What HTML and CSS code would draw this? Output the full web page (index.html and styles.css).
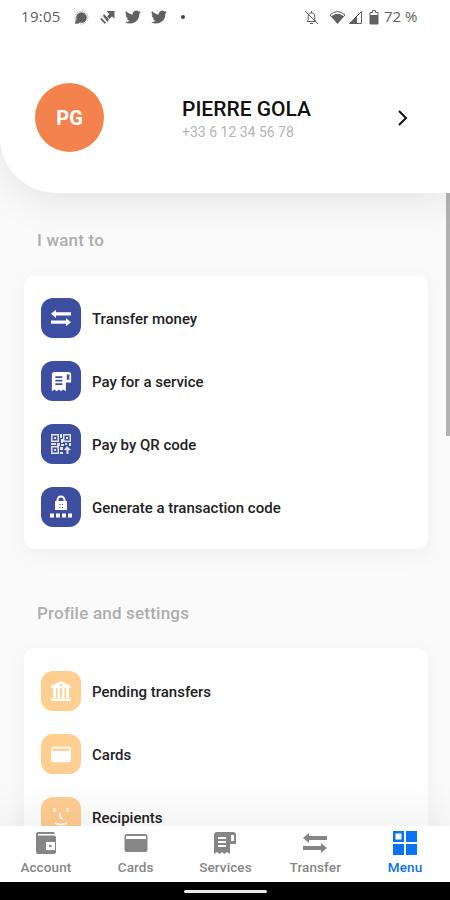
FILE: index.html
```html
<!DOCTYPE html>
<html lang="en">
<head>
    <meta charset="UTF-8">
    <meta name="viewport" content="width=device-width, initial-scale=1.0">
    <title>Menu</title>
    <link rel="stylesheet" href="styles.css">
</head>
<body>
    <!-- Shared icons -->
    <svg class="defs" width="0" height="0">
        <symbol id="transfer" viewBox="0 0 24 24">
            <path d="M6 2v3h18v4H6v3L0 7zM18 12v3H0v4h18v3l6-5z"/>
        </symbol>
        <symbol id="receipt" viewBox="0 0 24 24">
            <path fill-rule="evenodd" d="M4 1h16a3 3 0 0 1 3 3v9h-6v10l-3-2-2.500 2L9 21l-2.500 2L4 21l-3 2V4a3 3 0 0 1 3-3zM5 6v2h8V6zm0 4v2h8v-2zm0 4v2h8v-2zM18 4v6h3V4z"/>
        </symbol>
        <symbol id="card" viewBox="0 0 24 24">
            <path fill-rule="evenodd" d="M3 3h18a2.500 2.500 0 0 1 2.500 2.500v13A2.500 2.500 0 0 1 21 21H3A2.500 2.500 0 0 1 .5 18.500v-13A2.500 2.500 0 0 1 3 3zM2 5v3h20V5z"/>
        </symbol>
        <symbol id="twitter" viewBox="0 0 24 24">
            <path d="M24 4.600a10 10 0 0 1-2.800.8 5 5 0 0 0 2.100-2.700 10 10 0 0 1-3.100 1.200 4.900 4.900 0 0 0-8.400 4.500A14 14 0 0 1 1.700 3.100a4.900 4.900 0 0 0 1.500 6.600 5 5 0 0 1-2.200-.6 4.900 4.900 0 0 0 3.900 4.900 5 5 0 0 1-2.200.1 4.900 4.900 0 0 0 4.600 3.400A10 10 0 0 1 0 19.500 14 14 0 0 0 21.500 7z"/>
        </symbol>
    </svg>

    <div class="status">
        <span class="time">19:05</span>
        <svg class="chat" width="15" height="15" viewBox="0 0 15 15"><circle cx="7.500" cy="7.500" r="5.300"/><circle class="ring" cx="7.500" cy="7.500" r="6.500"/><path d="M1 14l1-5 4 4z"/></svg>
        <svg class="bolt" width="15" height="15" viewBox="0 0 15 15"><path d="M6.500 1h8v7.500L12 6.500 9.500 9 7 6.500 9.500 4zM4 4l5 5.500L7.500 12 3 6zM1 7.500l5 5L5 14 .5 9.500z"/></svg>
        <svg class="bird" width="16" height="16"><use href="#twitter"/></svg>
        <svg class="bird" width="16" height="16"><use href="#twitter"/></svg>
        <span class="dot"></span>
        <svg class="bell" width="15" height="15" viewBox="0 0 15 15"><path d="M3 11.500h9L10.800 10V6.500C10.800 4 9.500 3 7.500 3S4.200 4 4.200 6.500V10zM7.500 1v2M6 13.500h3M1 1l13 13"/></svg>
        <svg class="wifi" width="17" height="15" viewBox="0 0 17 15"><path class="line" d="M1 5Q8.500-2 16 5l-1.500 1.700Q8.500 2 2.500 6.700z"/><path d="M2 6.500Q8.500 2.500 15 6.500L8.500 14z"/></svg>
        <svg class="signal" width="15" height="15" viewBox="0 0 15 15"><path class="line" d="M13.500 1.500v12H1.500z"/><path d="M1 14L9 6v8z"/></svg>
        <svg class="battery" width="10" height="15" viewBox="0 0 10 15"><path class="line" d="M1 2.500h2.500v-2h3v2H9v11.500H1z"/><path d="M1 5h8v9H1z"/></svg>
        <span class="percent">72 %</span>
    </div>

    <header class="profile">
        <div class="avatar">PG</div>
        <div class="user">
            <h1>PIERRE GOLA</h1>
            <p>+33 6 12 34 56 78</p>
        </div>
        <svg class="chevron" width="12" height="18" viewBox="0 0 12 18"><path d="M2 2l7 7-7 7"/></svg>
    </header>

    <main class="content">
        <div class="scrollbar"></div>
        <h2>I want to</h2>
        <ul class="list blue">
            <li><span class="icon"><svg width="20" height="20"><use href="#transfer"/></svg></span><span>Transfer money</span></li>
            <li><span class="icon"><svg width="21" height="21"><use href="#receipt"/></svg></span><span>Pay for a service</span></li>
            <li>
                <span class="icon"><svg width="20" height="20" viewBox="0 0 20 20"><path opacity=".85" fill-rule="evenodd" d="M0 0h8v8H0zM1.500 1.500v5h5v-5zM3 3h2v2H3zM12 0h8v8h-8zM13.500 1.500v5h5v-5zM15 3h2v2h-2zM0 12h8v8H0zM1.500 13.500v5h5v-5zM3 15h2v2H3zM9 0h2v4H9zM10 5h2v4h-2zM0 9h5v2H0zM6 9h3v3H6zM10 10h3v2h-3zM14 9h2v2h-2zM18 9h2v3h-2zM9 13h3v3H9zM9 18h3v2H9zM16 12l4 4h-2.500v4h-2v-4H13z"/></svg></span>
                <span>Pay by QR code</span>
            </li>
            <li>
                <span class="icon"><svg width="24" height="24" viewBox="0 0 24 24"><path fill-rule="evenodd" d="M6 6h1.500V5a4.500 4.500 0 0 1 9 0v1H18v9H6zM9.500 6h5V5a2.500 2.500 0 0 0-5 0zM10.500 9h1v1h-1zm2.500 0h1v1h-1zm-2.500 3h1v1h-1zm2.500 0h1v1h-1zM1 18.500h4v4H1zM7 18.500h4v4H7zM13 18.500h4v4h-4zM19 18.500h4v4h-4z"/></svg></span>
                <span>Generate a transaction code</span>
            </li>
        </ul>

        <h2 class="second">Profile and settings</h2>
        <ul class="list orange">
            <li>
                <span class="icon"><svg width="22" height="20" viewBox="0 0 22 20"><path fill-rule="evenodd" d="M11 0l10 5v2H1V5zM11 2.500L9.500 4 11 5.500 12.500 4zM3 7h3v10H3zM7.500 7h2.500v10H7.500zM12 7h2.500v10H12zM16 7h3v10h-3zM1 17.500h20V20H1z"/></svg></span>
                <span>Pending transfers</span>
            </li>
            <li><span class="icon"><svg width="22" height="19" viewBox="0 1 24 22"><use href="#card" width="24" height="24"/></svg></span><span>Cards</span></li>
            <li>
                <span class="icon"><svg width="20" height="20" viewBox="0 0 20 20"><path class="face" d="M3.500 1v4M16.500 1v4M9 6v4q0 1.500 2.500 1.500M4 16q6 3 12 0"/></svg></span>
                <span>Recipients</span>
            </li>
        </ul>
    </main>

    <nav class="tabs">
        <a>
            <svg width="24" height="24" viewBox="0 0 24 24"><path fill-rule="evenodd" d="M4 1h15a2 2 0 0 1 2 2H4v1.500h16a2 2 0 0 1 2 2V21a2 2 0 0 1-2 2H4a2 2 0 0 1-2-2V3a2 2 0 0 1 2-2zM12 11v8h9v-8zM15 14h2.500v2H15z"/></svg>
            Account
        </a>
        <a><svg width="24" height="24"><use href="#card"/></svg>Cards</a>
        <a><svg width="24" height="24"><use href="#receipt"/></svg>Services</a>
        <a><svg width="24" height="24"><use href="#transfer"/></svg>Transfer</a>
        <a class="active">
            <svg width="24" height="24" viewBox="0 0 24 24"><path fill-rule="evenodd" d="M0 0h11v11H0zM2.500 2.500v6h6v-6zM13 0h11v11H13zM0 13h11v11H0zM13 13h11v11H13z"/></svg>
            Menu
        </a>
    </nav>
    <div class="home"><span></span></div>
</body>
</html>
```
FILE: styles.css
```css
* {
    box-sizing: border-box;
}
body {
    font-family: Roboto, sans-serif;
    background: #fff;
    display: flex;
    flex-direction: column;
    height: 900px;
    margin: 0;
    overflow: hidden;
}
h1, h2, p, ul {
    margin: 0;
    padding: 0;
}
svg {
    fill: currentColor;
    flex-shrink: 0;
}
.defs {
    position: absolute;
}
.status {
    display: flex;
    align-items: center;
    height: 34px;
    padding: 0 31px 0 21px;
    color: #606060;
    flex-shrink: 0;
}
.time, .percent {
    font-family: "Open Sans", sans-serif;
    font-size: 15px;
    line-height: 20px;
    padding-bottom: 2px;
    white-space: nowrap;
}
.time {
    width: 53px;
    letter-spacing: 0.3px;
}
.bolt {
    margin-left: 11px;
}
.bird {
    margin-left: 10px;
}
.ring {
    fill: none;
    stroke: #aaa;
    stroke-dasharray: 1.500 1;
}
.dot {
    width: 4px;
    height: 4px;
    border-radius: 50%;
    background: #444;
    margin-left: 14px;
}
.bell {
    margin-left: 119px;
}
.bell path, .line {
    fill: none;
    stroke: currentColor;
}
.wifi {
    margin-left: 10px;
}
.signal {
    margin-left: 2px;
}
.battery {
    margin-left: 6px;
}
.percent {
    margin-left: 5px;
}
.profile {
    position: relative;
    z-index: 1;
    display: flex;
    align-items: center;
    height: 159px;
    padding: 8px 41px 0 35px;
    background: #fff;
    border-bottom-left-radius: 56px;
    box-shadow: 0 8px 40px rgba(0,0,0,0.09);
    clip-path: inset(0 0 -80px 0);
    flex-shrink: 0;
}
.avatar {
    width: 69px;
    height: 69px;
    line-height: 71px;
    border-radius: 50%;
    background: #f4824d;
    color: #fff;
    font-size: 20px;
    font-weight: 700;
    text-align: center;
}
.user {
    flex: 1;
    margin: 3px 0 0 78px;
}
h1 {
    color: #111;
    font-size: 21px;
    font-weight: 500;
    line-height: 25px;
}
.user p {
    color: #b5b5b5;
    font-size: 14px;
    line-height: 20px;
}
.chevron path {
    fill: none;
    stroke: #111;
    stroke-width: 2;
}
.content {
    position: relative;
    flex: 1;
    min-height: 0;
    overflow: hidden;
    background: #fafafa;
    /* runs up behind the rounded corner of the header */
    margin-top: -60px;
    padding: 96px 22px 0 24px;
}
.scrollbar {
    position: absolute;
    top: 60px;
    right: 0;
    width: 4px;
    height: 243px;
    background: #b2b2b2;
}
h2 {
    color: #adadad;
    font-size: 17px;
    font-weight: 500;
    letter-spacing: 0.2px;
    line-height: 22px;
    padding-left: 13px;
}
.second {
    margin-top: 53px;
}
.list {
    list-style: none;
    display: flex;
    flex-direction: column;
    gap: 23px;
    margin-top: 24px;
    padding: 23px 17px 22px;
    background: #fff;
    border-radius: 11px;
    box-shadow: 0 6px 24px rgba(0,0,0,0.045);
}
.list li {
    display: flex;
    align-items: center;
    gap: 11px;
    height: 40px;
    color: #222;
    font-size: 15px;
    font-weight: 500;
    line-height: 20px;
}
.list li > span:last-child {
    padding-top: 2px;
}
.icon {
    display: flex;
    align-items: center;
    justify-content: center;
    width: 40px;
    height: 40px;
    border-radius: 12px;
    color: #fff;
}
.blue .icon {
    background: #3d4da0;
}
.orange .icon {
    background: #ffce91;
}
.face {
    fill: none;
    stroke: #fff;
    stroke-width: 1.800;
}
.tabs {
    position: relative;
    display: flex;
    height: 56px;
    padding-left: 1px;
    background: #fff;
    box-shadow: 0 -8px 50px rgba(0,0,0,0.07);
    flex-shrink: 0;
}
.tabs a {
    flex: 1;
    display: flex;
    flex-direction: column;
    align-items: center;
    gap: 4px;
    padding-top: 5px;
    color: #868686;
    font-size: 13.500px;
    font-weight: 500;
    letter-spacing: 0.1px;
    line-height: 16px;
}
.tabs .active {
    color: #0873f5;
}
.home {
    display: flex;
    align-items: center;
    justify-content: center;
    height: 18px;
    background: #000;
    flex-shrink: 0;
}
.home span {
    width: 83px;
    height: 3px;
    border-radius: 2px;
    background: #eee;
}
```
